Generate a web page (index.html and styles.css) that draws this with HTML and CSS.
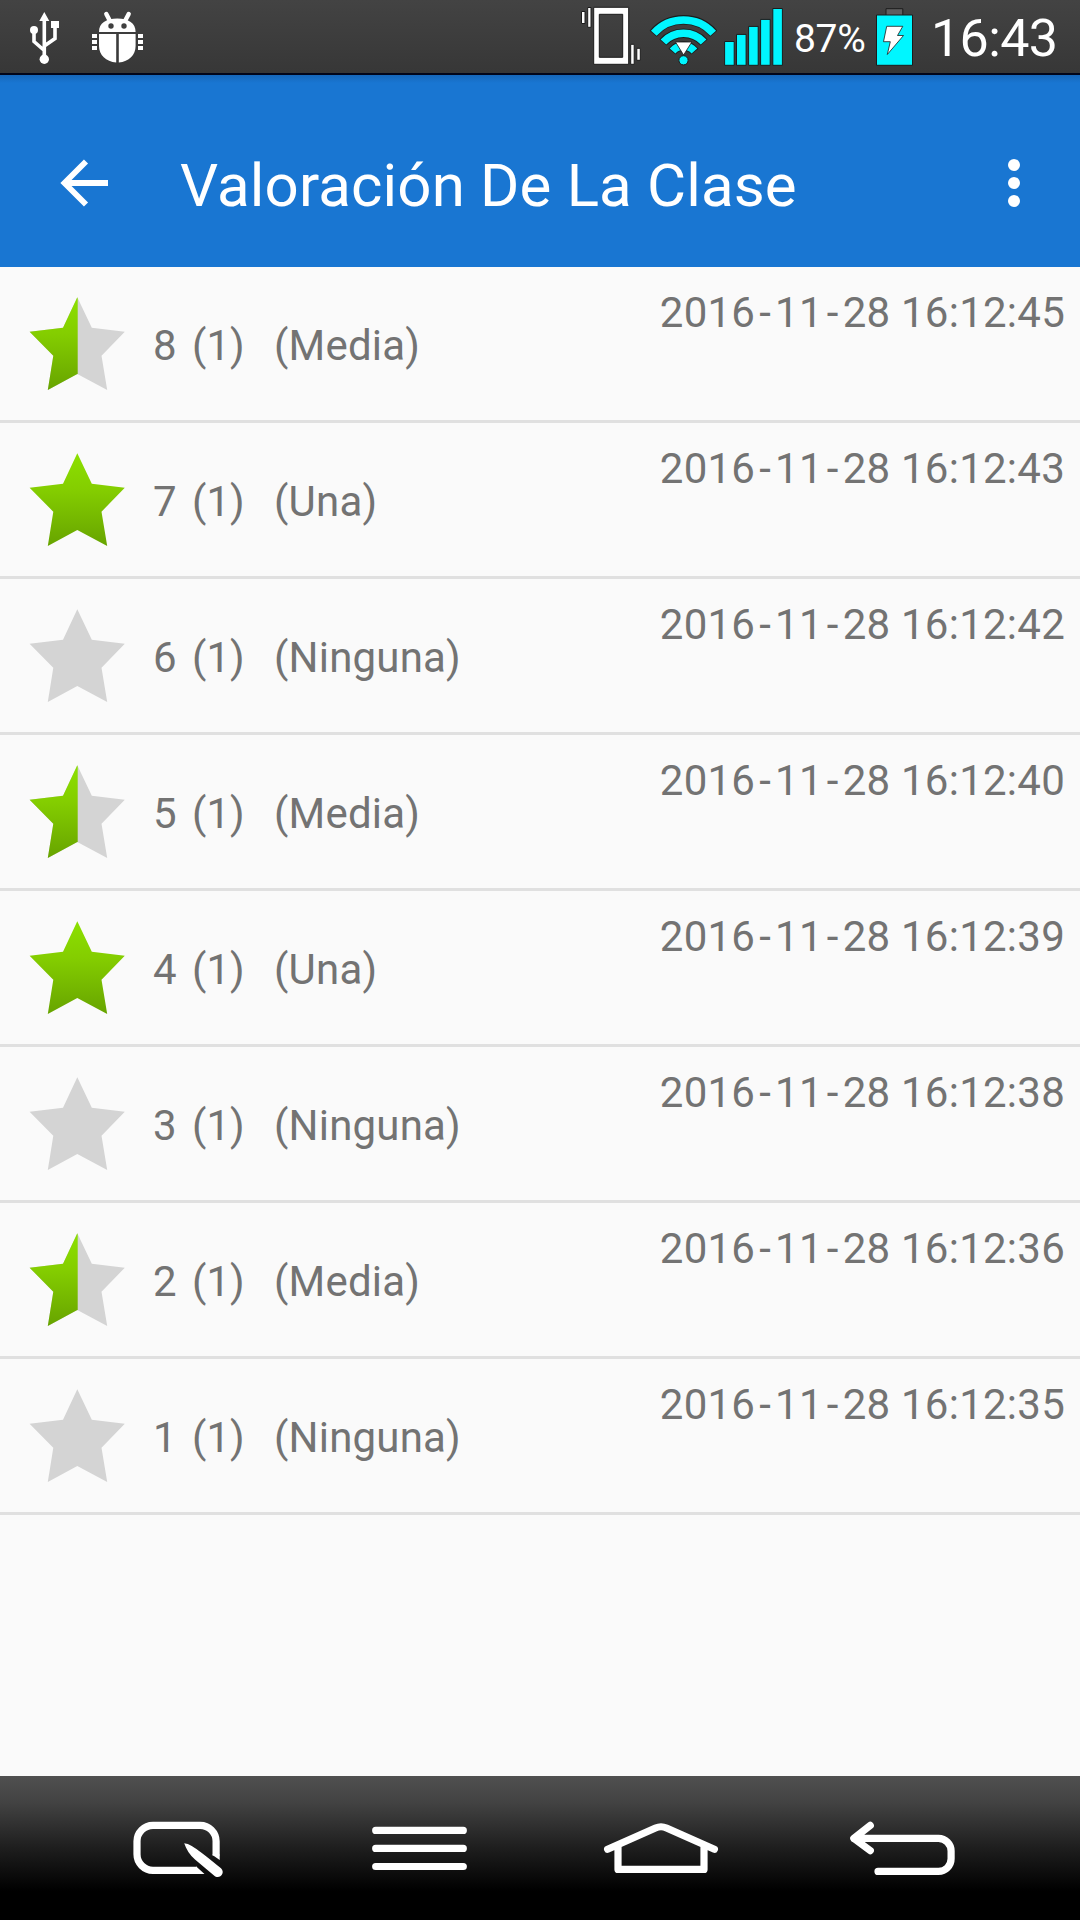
FILE: index.html
```html
<!DOCTYPE html>
<html lang="es">
<head>
    <meta charset="UTF-8">
    <meta name="viewport" content="width=device-width, initial-scale=1.0">
    <title>Valoración De La Clase</title>
    <link rel="stylesheet" href="styles.css">
</head>
<body>
    <!-- star shapes shared by all rows -->
    <svg class="defs" width="0" height="0">
        <defs>
            <linearGradient id="green" x1="0" y1="0" x2="0" y2="1">
                <stop offset="0" stop-color="#8ce000"/>
                <stop offset="0.4" stop-color="#84cd00"/>
                <stop offset="1" stop-color="#67a400"/>
            </linearGradient>
            <clipPath id="left-half"><rect x="0" y="0" width="48.7" height="96"/></clipPath>
            <path id="shape" d="M48.3 1.2 62.8 31.7 95.8 35.7 72.5 59.7 78.2 94 48.3 78 18.8 94 24.3 59.7 .6 35.7 34 31.7Z"/>
        </defs>
        <symbol id="star-none" viewBox="0 0 96 96"><use href="#shape" fill="#d4d4d4"/></symbol>
        <symbol id="star-full" viewBox="0 0 96 96"><use href="#shape" fill="url(#green)"/></symbol>
        <symbol id="star-half" viewBox="0 0 96 96">
            <use href="#shape" fill="#d4d4d4"/>
            <g clip-path="url(#left-half)"><use href="#shape" fill="url(#green)"/></g>
        </symbol>
    </svg>

    <div class="status-bar">
        <svg class="usb" width="34" height="72" viewBox="28 0 34 72">
            <path d="M44.3 18V58M34 30V41.5L44.3 50.5M55 26V38.5L44.3 46" fill="none" stroke="#fff" stroke-width="3.6"/>
            <path d="M44.3 12 49.3 21H39.3ZM51 21H59V28H51Z" fill="#fff"/>
            <circle cx="34" cy="30" r="4" fill="#fff"/>
            <circle cx="44.3" cy="59.2" r="4.7" fill="#fff"/>
        </svg>
        <svg class="debug" width="54" height="72" viewBox="90 0 54 72">
            <path d="M106.3 14 110 21M128.7 14 125 21" stroke="#fff" stroke-width="4.4" stroke-linecap="round"/>
            <path d="M99 32C99 23 106 18.5 117.3 18.5S135.6 23 135.6 32ZM99 34H116.2V62.6C106 61.5 99 55 99 46ZM118.8 34H135.6V46C135.6 55 129 61.5 118.8 62.6Z" fill="#fff"/>
            <path d="M92 34H97V38H92ZM92 40H97V44H92ZM92 46H97V50H92ZM138 34H143V38H138ZM138 40H143V44H138ZM138 46H143V50H138Z" fill="#fff"/>
            <circle cx="111" cy="26" r="2.7" fill="#3f3f3f"/>
            <circle cx="124" cy="26" r="2.7" fill="#3f3f3f"/>
        </svg>
        <svg class="vibrate" width="62" height="72" viewBox="580 0 62 72">
            <path d="M593.7 7.3H628.7V64.3H593.7ZM599.3 14.3V57.3H622.7V14.3Z" fill="#fff" fill-rule="evenodd" stroke="#1c1c1c"/>
            <path d="M581.5 11.5H585V23.5H581.5ZM587.7 7.5H591V27.3H587.7ZM630.7 44.3H634.2V64.3H630.7ZM636.8 48.3H640.3V60.3H636.8Z" fill="#fff" stroke="#1c1c1c"/>
        </svg>
        <svg class="wifi" width="68" height="72" viewBox="649 0 68 72">
            <g fill="none" stroke="#1c1c1c" stroke-width="9.4">
                <path d="M653.2 33.7A40 40 0 0 1 713.8 33.7M662.9 42.5A27.5 27.5 0 0 1 704.1 42.5M672.1 51.6A14.5 14.5 0 0 1 694.9 51.6"/>
            </g>
            <g fill="none" stroke="#00f6ff" stroke-width="7.6">
                <path d="M653.8 33.2A40 40 0 0 1 713.2 33.2M663.4 42A27.5 27.5 0 0 1 703.6 42M672.6 51A14.5 14.5 0 0 1 694.4 51"/>
            </g>
            <circle cx="683.5" cy="60.3" r="4.6" fill="#00f6ff" stroke="#1c1c1c"/>
            <path d="M675.5 42H691.8L683.6 55Z" fill="#fff" stroke="#1c1c1c" stroke-width=".8"/>
        </svg>
        <svg class="signal" width="60" height="72" viewBox="724 0 60 72">
            <path d="M724.6 41.5H734.2V65.3H724.6ZM736.5 34.4H746.1V65.3H736.5ZM748.6 26.4H758.2V65.3H748.6ZM760.6 19.4H770.2V65.3H760.6ZM772.8 8.5H782.4V65.3H772.8Z" fill="#00f6ff" stroke="#1c1c1c"/>
        </svg>
        <span class="percent">87%</span>
        <svg class="battery" width="38" height="72" viewBox="876 0 38 72">
            <path d="M886 15V8.7H902.8V15" fill="#5f5f5f" stroke="#1c1c1c"/>
            <path d="M876.5 15H912.5V65.3H876.5Z" fill="#00f6ff" stroke="#1c1c1c"/>
            <path d="M886.7 26.3H902.8L897.5 35.5H903.5L887.3 54.5L890.3 41.7H883.5Z" fill="#fff" stroke="#1c1c1c" stroke-width=".8"/>
        </svg>
        <span class="clock">16:43</span>
    </div>

    <header>
        <svg class="back" width="50" height="50" viewBox="59 158 50 50">
            <path d="M108 183H65M86 161.5 64.5 183 86 204.5" fill="none" stroke="#fff" stroke-width="5.8"/>
        </svg>
        <h1>Valoración De La Clase</h1>
        <svg class="more" width="14" height="50" viewBox="1007 158 14 50">
            <circle cx="1014" cy="165" r="6" fill="#fff"/>
            <circle cx="1014" cy="183" r="6" fill="#fff"/>
            <circle cx="1014" cy="201" r="6" fill="#fff"/>
        </svg>
    </header>

    <main class="list">
        <div class="row">
            <svg class="star"><use href="#star-half"/></svg>
            <span class="num">8</span><span class="count">(1)</span><span class="label">(Media)</span>
            <span class="date">2016<b>-</b>11<b>-</b>28 16:12:45</span>
        </div>
        <div class="row">
            <svg class="star"><use href="#star-full"/></svg>
            <span class="num">7</span><span class="count">(1)</span><span class="label">(Una)</span>
            <span class="date">2016<b>-</b>11<b>-</b>28 16:12:43</span>
        </div>
        <div class="row">
            <svg class="star"><use href="#star-none"/></svg>
            <span class="num">6</span><span class="count">(1)</span><span class="label">(Ninguna)</span>
            <span class="date">2016<b>-</b>11<b>-</b>28 16:12:42</span>
        </div>
        <div class="row">
            <svg class="star"><use href="#star-half"/></svg>
            <span class="num">5</span><span class="count">(1)</span><span class="label">(Media)</span>
            <span class="date">2016<b>-</b>11<b>-</b>28 16:12:40</span>
        </div>
        <div class="row">
            <svg class="star"><use href="#star-full"/></svg>
            <span class="num">4</span><span class="count">(1)</span><span class="label">(Una)</span>
            <span class="date">2016<b>-</b>11<b>-</b>28 16:12:39</span>
        </div>
        <div class="row">
            <svg class="star"><use href="#star-none"/></svg>
            <span class="num">3</span><span class="count">(1)</span><span class="label">(Ninguna)</span>
            <span class="date">2016<b>-</b>11<b>-</b>28 16:12:38</span>
        </div>
        <div class="row">
            <svg class="star"><use href="#star-half"/></svg>
            <span class="num">2</span><span class="count">(1)</span><span class="label">(Media)</span>
            <span class="date">2016<b>-</b>11<b>-</b>28 16:12:36</span>
        </div>
        <div class="row">
            <svg class="star"><use href="#star-none"/></svg>
            <span class="num">1</span><span class="count">(1)</span><span class="label">(Ninguna)</span>
            <span class="date">2016<b>-</b>11<b>-</b>28 16:12:35</span>
        </div>
    </main>

    <nav>
        <svg width="240" height="144" viewBox="60 1776 240 144">
            <path d="M216.1 1855.5V1841.3A16 16 0 0 0 200.1 1825.3H153A16 16 0 0 0 137 1841.3V1854.3A16 16 0 0 0 153 1870.3H197" fill="none" stroke="#fff" stroke-width="7.2"/>
            <path d="M212.5 1855V1854.5H219.7V1860ZM196 1866.7H196.5L204.5 1873.9H196Z" fill="#fff"/>
            <path d="M184.2 1843.2C190 1843.5 199 1850 221 1868.3C226 1873.5 219 1880 214 1875.5L195 1859.5C190 1855 186 1849 184.2 1843.2Z" fill="#fff"/>
        </svg>
        <svg width="240" height="144" viewBox="300 1776 240 144">
            <path d="M375.7 1830.4H463.3M375.7 1848.4H463.3M375.7 1866.5H463.3" stroke="#fff" stroke-width="7.2" stroke-linecap="round"/>
        </svg>
        <svg width="240" height="144" viewBox="540 1776 240 144">
            <path d="M607.6 1849.2 655.5 1828Q661 1825.5 666.5 1828L714.4 1849.2M618 1846V1869.4H704V1846" fill="none" stroke="#fff" stroke-width="7.2" stroke-linecap="round" stroke-linejoin="round"/>
        </svg>
        <svg width="240" height="144" viewBox="780 1776 240 144">
            <path d="M870.3 1825.4 853.8 1838.3 870.3 1850.6M854 1838.4H938.5A12.6 12.6 0 0 1 951.1 1851V1858.8A12.6 12.6 0 0 1 938.5 1871.4H878" fill="none" stroke="#fff" stroke-width="7.2" stroke-linecap="round" stroke-linejoin="round"/>
        </svg>
    </nav>
</body>
</html>
```
FILE: styles.css
```css
* { box-sizing: border-box; }
body { margin: 0; width: 1080px; height: 1920px; display: flex; flex-direction: column; background: #fafafa; color: #737373; font-family: Roboto, sans-serif; overflow: hidden; }
svg { display: block; flex: none; }

.status-bar { height: 75px; flex: none; display: flex; align-items: flex-start; padding-left: 28px; background: linear-gradient(#434343, #373737); border-bottom: 2px solid #02061a; color: #fff; white-space: nowrap; }
.debug { margin-left: 28px; }
.vibrate { margin-left: auto; }
.wifi { margin-left: 7px; }
.signal { margin-left: 7px; }
.percent { width: 82px; margin-left: 10px; font-size: 39px; line-height: 79px; letter-spacing: -0.3px; }
.clock { width: 149px; margin-left: 17px; font-size: 52px; line-height: 77px; letter-spacing: -0.6px; }

header { height: 192px; flex: none; display: flex; align-items: flex-start; padding: 83px 59px 0; background: linear-gradient(#1667ba 0, #1976d2 8px); color: #fff; }
header h1 { margin: 0 0 0 71px; font-size: 60px; font-weight: 400; line-height: 56px; letter-spacing: 0.16px; white-space: nowrap; }
.more { margin-left: auto; }

.list { flex: 1; }
.row { height: 156px; display: flex; align-items: flex-start; padding: 0 15px 0 29px; border-bottom: 3px solid #e0e0e0; font-size: 42px; line-height: 50px; white-space: nowrap; }
.star { width: 96px; height: 96px; margin-top: 29px; }
.num { width: 39px; margin: 54px 0 0 28px; }
.count { width: 82px; margin-top: 54px; }
.label { margin-top: 54px; letter-spacing: 0.2px; }
.date { margin: 21px 0 0 auto; letter-spacing: 0.25px; }
.date b { padding: 0 4px; font-weight: 400; }

nav { height: 144px; flex: none; display: flex; justify-content: center; background: linear-gradient(#505050 0, #434343 18%, #1e1e1e 50%, #000 80%); }
```
